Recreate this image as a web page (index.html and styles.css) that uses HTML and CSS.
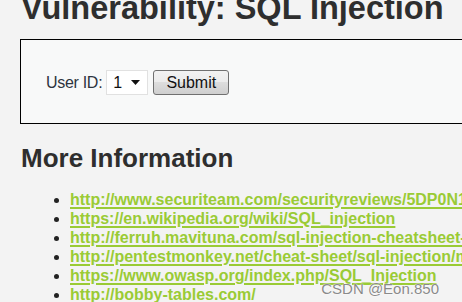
FILE: index.html
```html
<!DOCTYPE html>
<html lang="en">

<head>
  <meta charset="UTF-8">
  <title>Vulnerability: SQL Injection</title>
  <link rel="stylesheet" href="styles.css">
</head>

<body>
  <div class="body_padded">
    <h1>Vulnerability: SQL Injection</h1>

    <div class="vulnerable_code_area">
      <form action="#" method="GET" class="form_row">
        <span class="label">User ID:</span>
        <span class="select_wrap">
          <select name="id">
            <option value="1">1</option>
            <option value="2">2</option>
            <option value="3">3</option>
            <option value="4">4</option>
            <option value="5">5</option>
          </select>
          <svg class="arrow" width="9" height="5" viewBox="0 0 9 5"><path d="M0 0H9L4.5 5Z" fill="#111"/></svg>
        </span>
        <input type="submit" name="Submit" value="Submit">
      </form>
    </div>

    <h2>More Information</h2>
    <ul>
      <li><a href="#">http://www.securiteam.com/securityreviews/5DP0N1P76E.html</a></li>
      <li><a href="#">https://en.wikipedia.org/wiki/SQL_injection</a></li>
      <li><a href="#">http://ferruh.mavituna.com/sql-injection-cheatsheet-oku/</a></li>
      <li><a href="#">http://pentestmonkey.net/cheat-sheet/sql-injection/mysql-sql-injection-cheat-sheet</a></li>
      <li><a href="#">https://www.owasp.org/index.php/SQL_Injection</a></li>
      <li><a href="#">http://bobby-tables.com/</a></li>
    </ul>
  </div>

  <div class="watermark">CSDN @Eon.850</div>
</body>

</html>
```

FILE: styles.css
```css
html,
body {
  overflow: hidden;
}

body {
  margin: 0;
  background-color: #f3f3f3;
  font-family: "Liberation Sans", Arial, sans-serif;
  color: #2e2e2e;
  height: 302px;
  position: relative;
}

.body_padded {
  padding-left: 20px;
  width: 700px;
}

h1 {
  margin: -8px 0 15px 1px;
  font-size: 32.5px;
  line-height: 32px;
  font-weight: bold;
  white-space: nowrap;
}

.vulnerable_code_area {
  border: 1px solid #000;
  background-color: #f8f9f9;
  width: 560px;
  padding: 30px 25px 28px;
}

.form_row {
  display: flex;
  align-items: center;
  gap: 2px;
  margin: 0;
  font-size: 16px;
  height: 25px;
}

.label {
  color: #2d3440;
  margin-right: 2px;
  letter-spacing: -0.3px;
}

.select_wrap {
  position: relative;
  display: inline-block;
}

select {
  appearance: none;
  -webkit-appearance: none;
  width: 42px;
  height: 25px;
  padding: 0 0 0 6px;
  border: 1px solid #e1e1e1;
  border-radius: 0;
  background: #fff;
  font-family: "Liberation Sans", Arial, sans-serif;
  font-size: 16px;
  color: #111;
}

.arrow {
  position: absolute;
  right: 8px;
  top: 10px;
  pointer-events: none;
}

input[type="submit"] {
  margin-left: 3px;
  width: 76px;
  height: 25px;
  padding: 0;
  border: 1px solid #707070;
  border-radius: 3px;
  background: linear-gradient(#f2f2f2, #ebebeb 50%, #dddddd 50%, #cfcfcf);
  font-family: "Liberation Sans", Arial, sans-serif;
  font-size: 16px;
  color: #111;
}

h2 {
  margin: 19px 0 17px 1px;
  font-size: 26px;
  line-height: 30px;
  font-weight: bold;
}

ul {
  margin: 0;
  padding-left: 50px;
  font-size: 16px;
  line-height: 19px;
}

li {
  color: #222;
  white-space: nowrap;
}

a {
  color: #9acb35;
  font-weight: bold;
  text-decoration: underline;
  text-decoration-thickness: 2px;
  text-underline-offset: 2px;
}

.watermark {
  position: absolute;
  right: 23px;
  bottom: 5px;
  font-size: 15px;
  color: #8a8a8a;
  text-shadow: 0 0 1px #fff, 0 0 2px #fff;
}
```
